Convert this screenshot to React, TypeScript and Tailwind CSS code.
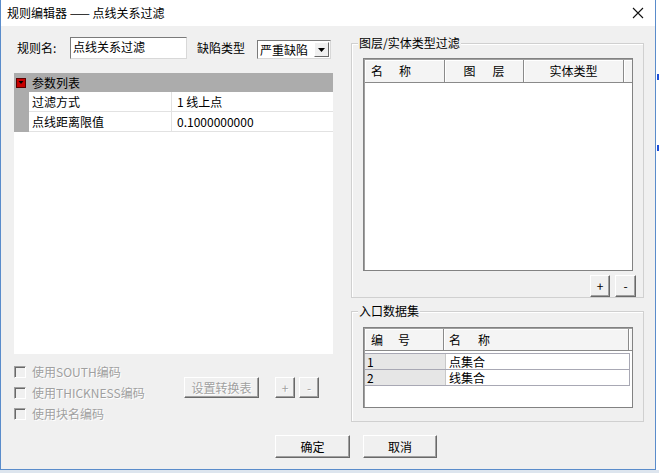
import React from 'react';

const btn3d =
  'flex items-center justify-center bg-[#f0f0f0] border border-t-white border-l-white border-b-[#696969] border-r-[#696969] shadow-[inset_-1px_-1px_0_#a0a0a0]';

const Btn: React.FC<{ className?: string; disabled?: boolean; children: React.ReactNode }> = ({
  className = '',
  disabled,
  children,
}) => (
  <div
    className={`${btn3d} ${className} ${
      disabled ? 'text-[#a0a0a0] [text-shadow:1px_1px_0_#fff]' : 'text-black'
    }`}
  >
    {children}
  </div>
);

const Checkbox: React.FC<{ label: string }> = ({ label }) => (
  <div className="flex items-center h-[21px]">
    <div className="w-[12px] h-[12px] bg-[#f0f0f0] border border-t-[#a0a0a0] border-l-[#a0a0a0] border-b-white border-r-white shadow-[inset_1px_1px_0_#696969]" />
    <span className="ml-[6px] text-[#a0a0a0] [text-shadow:1px_1px_0_#fff]">{label}</span>
  </div>
);

const Group: React.FC<{ title: string; className?: string; children: React.ReactNode }> = ({
  title,
  className = '',
  children,
}) => (
  <div className={`relative border border-[#d0d0d0] shadow-[inset_1px_1px_0_#fff] ${className}`}>
    <span className="absolute top-[-9px] left-[6px] px-[1px] bg-[#f0f0f0] leading-[16px]">{title}</span>
    {children}
  </div>
);

const headCell = 'h-full flex items-center border-r border-r-[#8a8a8a] shadow-[inset_1px_1px_0_#fff]';

export default function App() {
  return (
    <div className="w-[659px] h-[473px] bg-[#dde5ee] font-['Noto_Sans_CJK_SC',sans-serif] text-[12px] leading-[16px] text-black overflow-hidden">
      <div className="flex">
        <div className="w-[656px] h-[470px] flex flex-col bg-[#f0f0f0] border-l border-r border-b border-[#5a8ccb]">
          {/* Title bar */}
          <div className="h-[26px] bg-white flex items-center justify-between pl-[6px] pr-[9px] shrink-0">
            <span>规则编辑器 —— 点线关系过滤</span>
            <svg width="12" height="12" viewBox="0 0 12 12" className="mr-[2px]">
              <path d="M1 1 L11 11 M11 1 L1 11" stroke="#111" strokeWidth="1.1" />
            </svg>
          </div>

          {/* Body */}
          <div className="flex h-[399px]">
            {/* Left column */}
            <div className="ml-[13px] w-[319px] flex flex-col">
              <div className="mt-[11px] h-[22px] flex items-center">
                <span className="ml-[3px] w-[53px]">规则名:</span>
                <div className="w-[117px] h-[22px] bg-white border border-t-[#7a7a7a] border-l-[#7a7a7a] border-b-[#d8d8d8] border-r-[#d8d8d8] pl-[2px] pt-[1px]">
                  点线关系过滤
                </div>
                <span className="ml-[10px] w-[60px]">缺陷类型</span>
                <div className="w-[74px] h-[19px] self-end bg-white border border-t-[#7a7a7a] border-l-[#7a7a7a] border-b-[#d8d8d8] border-r-[#d8d8d8] flex items-center">
                  <span className="flex-1 pl-[2px]">严重缺陷</span>
                  <div className="w-[15px] h-[15px] mr-[1px] bg-[#f0f0f0] border border-t-white border-l-white border-b-[#696969] border-r-[#696969] flex items-center justify-center">
                    <svg width="7" height="4" viewBox="0 0 7 4">
                      <path d="M0 0 H7 L3.5 4 Z" fill="#000" />
                    </svg>
                  </div>
                </div>
              </div>

              {/* Property grid */}
              <div className="mt-[14px] h-[281px] bg-white">
                <div className="h-[19px] bg-[#acacac] flex items-center">
                  <svg width="10" height="10" viewBox="0 0 10 10" className="ml-[2px]">
                    <rect x="0.5" y="0.5" width="9" height="9" fill="#c80000" stroke="#5a0000" />
                    <path d="M2.5 3 H7.5 L5 6 Z" fill="#000" />
                  </svg>
                  <span className="ml-[6px]">参数列表</span>
                </div>
                {[
                  ['过滤方式', '1 线上点'],
                  ['点线距离限值', '0.1000000000'],
                ].map(([k, v]) => (
                  <div key={k} className="flex h-[20px]">
                    <div className="w-[15px] bg-[#acacac]" />
                    <div className="w-[143px] border-r border-b border-[#e2e2e2] pl-[3px] flex items-center">{k}</div>
                    <div className="flex-1 border-b border-[#e2e2e2] pl-[5px] flex items-center">{v}</div>
                  </div>
                ))}
              </div>

              <div className="flex">
                <div className="w-[170px] pt-[7px]">
                  <Checkbox label="使用SOUTH编码" />
                  <Checkbox label="使用THICKNESS编码" />
                  <Checkbox label="使用块名编码" />
                </div>
                <div className="mt-[23px] flex h-[21px]">
                  <Btn disabled className="w-[75px]">设置转换表</Btn>
                  <Btn disabled className="ml-[16px] w-[20px]">+</Btn>
                  <Btn disabled className="ml-[4px] w-[20px]">-</Btn>
                </div>
              </div>
            </div>

            {/* Right column */}
            <div className="ml-[18px] w-[293px] flex flex-col">
              <Group title="图层/实体类型过滤" className="mt-[17px] h-[255px]">
                <div className="ml-[11px] mt-[14px] w-[270px] h-[213px] bg-white border border-[#828282] shadow-[inset_1px_1px_0_#a0a0a0] flex flex-col">
                  <div className="h-[23px] flex bg-[#f4f4f4] border-b border-[#8a8a8a] ml-[1px] mt-[1px]">
                    <div className={`${headCell} w-[80px] pl-[6px] gap-[16px]`}>
                      <span>名</span>
                      <span>称</span>
                    </div>
                    <div className={`${headCell} w-[79px] justify-center gap-[17px]`}>
                      <span>图</span>
                      <span>层</span>
                    </div>
                    <div className={`${headCell} w-[100px] justify-center`}>实体类型</div>
                    <div className="flex-1 shadow-[inset_1px_1px_0_#fff]" />
                  </div>
                </div>
                <div className="flex justify-end mt-[4px] pr-[7px]">
                  <Btn className="w-[20px] h-[22px]">+</Btn>
                  <Btn className="ml-[5px] w-[21px] h-[22px]">-</Btn>
                </div>
              </Group>

              <Group title="入口数据集" className="mt-[13px] h-[111px]">
                <div className="ml-[11px] mt-[15px] w-[270px] h-[81px] bg-white border border-[#828282] shadow-[inset_1px_1px_0_#a0a0a0] flex flex-col">
                  <div className="h-[22px] flex bg-[#f4f4f4] border-b border-[#8a8a8a] ml-[1px] mt-[1px]">
                    <div className={`${headCell} w-[79px] pl-[6px] gap-[15px]`}>
                      <span>编</span>
                      <span>号</span>
                    </div>
                    <div className={`${headCell} w-[185px] pl-[5px] gap-[17px]`}>
                      <span>名</span>
                      <span>称</span>
                    </div>
                    <div className="flex-1 shadow-[inset_1px_1px_0_#fff]" />
                  </div>
                  <div className="mt-[2px] ml-[1px] w-[265px] border-t border-r border-[#a8a8b4]">
                    {[
                      ['1', '点集合'],
                      ['2', '线集合'],
                    ].map(([n, name]) => (
                      <div key={n} className="flex h-[16px] border-b border-[#a8a8b4]">
                        <div className="w-[80px] bg-[#e6e6e6] pl-[2px] flex items-center">{n}</div>
                        <div className="flex-1 pl-[3px] flex items-center border-l border-[#c8c8c8]">{name}</div>
                      </div>
                    ))}
                  </div>
                </div>
              </Group>
            </div>
          </div>

          {/* Dialog buttons */}
          <div className="mt-[10px] ml-[274px] flex">
            <Btn className="w-[75px] h-[23px]">确定</Btn>
            <Btn className="ml-[13px] w-[74px] h-[23px]">取消</Btn>
          </div>
        </div>
        <div className="flex-1 h-[470px] bg-white relative">
          <div className="absolute top-[74px] left-[1px] w-[2px] h-[6px] bg-[#1d4fd8]" />
          <div className="absolute top-[145px] left-[1px] w-[2px] h-[6px] bg-[#1d4fd8]" />
        </div>
      </div>
    </div>
  );
}
